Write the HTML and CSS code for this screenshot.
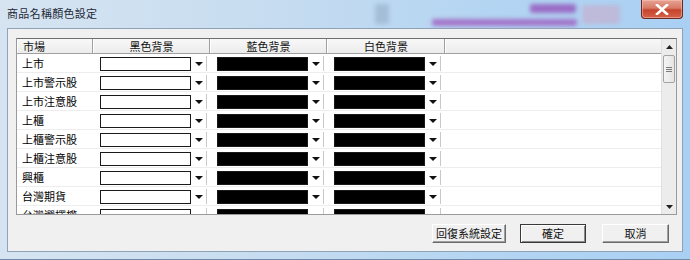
FILE: index.html
```html
<!DOCTYPE html>
<html lang="zh-Hant">
<head>
<meta charset="utf-8">
<title>商品名稱顏色設定</title>
<link rel="stylesheet" href="styles.css">
</head>
<body>
<div class="window">
  <div class="titlebar">
    <div class="glass-bits">
      <span class="bit bit-a"></span>
      <span class="bit bit-b"></span>
      <span class="bit bit-c"></span>
      <span class="bit bit-d"></span>
    </div>
    <span class="title">商品名稱顏色設定</span>
    <div class="close">
      <svg width="14" height="11" viewBox="0 0 14 11"><path d="M2 1 L12 10 M12 1 L2 10" stroke="#fff" stroke-width="2.6" stroke-linecap="square"/></svg>
    </div>
  </div>
  <div class="client">
    <div class="grid">
      <div class="table">
        <div class="thead">
          <div class="th th-name">市場</div>
          <div class="th">黑色背景</div>
          <div class="th">藍色背景</div>
          <div class="th">白色背景</div>
          <div class="th th-fill"></div>
        </div>
        <div class="tbody">
          <div class="row"><div class="name">上市</div><div class="cell"><div class="combo"><span class="box white"></span><span class="drop"></span></div></div><div class="cell"><div class="combo"><span class="box black"></span><span class="drop"></span></div></div><div class="cell"><div class="combo"><span class="box black"></span><span class="drop"></span></div></div><div class="fill"></div></div>
          <div class="row"><div class="name">上市警示股</div><div class="cell"><div class="combo"><span class="box white"></span><span class="drop"></span></div></div><div class="cell"><div class="combo"><span class="box black"></span><span class="drop"></span></div></div><div class="cell"><div class="combo"><span class="box black"></span><span class="drop"></span></div></div><div class="fill"></div></div>
          <div class="row"><div class="name">上市注意股</div><div class="cell"><div class="combo"><span class="box white"></span><span class="drop"></span></div></div><div class="cell"><div class="combo"><span class="box black"></span><span class="drop"></span></div></div><div class="cell"><div class="combo"><span class="box black"></span><span class="drop"></span></div></div><div class="fill"></div></div>
          <div class="row"><div class="name">上櫃</div><div class="cell"><div class="combo"><span class="box white"></span><span class="drop"></span></div></div><div class="cell"><div class="combo"><span class="box black"></span><span class="drop"></span></div></div><div class="cell"><div class="combo"><span class="box black"></span><span class="drop"></span></div></div><div class="fill"></div></div>
          <div class="row"><div class="name">上櫃警示股</div><div class="cell"><div class="combo"><span class="box white"></span><span class="drop"></span></div></div><div class="cell"><div class="combo"><span class="box black"></span><span class="drop"></span></div></div><div class="cell"><div class="combo"><span class="box black"></span><span class="drop"></span></div></div><div class="fill"></div></div>
          <div class="row"><div class="name">上櫃注意股</div><div class="cell"><div class="combo"><span class="box white"></span><span class="drop"></span></div></div><div class="cell"><div class="combo"><span class="box black"></span><span class="drop"></span></div></div><div class="cell"><div class="combo"><span class="box black"></span><span class="drop"></span></div></div><div class="fill"></div></div>
          <div class="row"><div class="name">興櫃</div><div class="cell"><div class="combo"><span class="box white"></span><span class="drop"></span></div></div><div class="cell"><div class="combo"><span class="box black"></span><span class="drop"></span></div></div><div class="cell"><div class="combo"><span class="box black"></span><span class="drop"></span></div></div><div class="fill"></div></div>
          <div class="row"><div class="name">台灣期貨</div><div class="cell"><div class="combo"><span class="box white"></span><span class="drop"></span></div></div><div class="cell"><div class="combo"><span class="box black"></span><span class="drop"></span></div></div><div class="cell"><div class="combo"><span class="box black"></span><span class="drop"></span></div></div><div class="fill"></div></div>
          <div class="row"><div class="name">台灣選擇權</div><div class="cell"><div class="combo"><span class="box white"></span><span class="drop"></span></div></div><div class="cell"><div class="combo"><span class="box black"></span><span class="drop"></span></div></div><div class="cell"><div class="combo"><span class="box black"></span><span class="drop"></span></div></div><div class="fill"></div></div>
        </div>
      </div>
      <div class="scrollbar">
        <div class="sb-btn"><svg width="7" height="4" viewBox="0 0 7 4"><path d="M0 4 L3.5 0 L7 4 Z" fill="#222"/></svg></div>
        <div class="sb-track">
          <div class="thumb"><span class="grip"></span><span class="grip"></span><span class="grip"></span></div>
        </div>
        <div class="sb-btn"><svg width="7" height="4" viewBox="0 0 7 4"><path d="M0 0 L7 0 L3.5 4 Z" fill="#222"/></svg></div>
      </div>
    </div>
    <div class="buttons">
      <button class="btn btn-wide">回復系統設定</button>
      <button class="btn btn-default">確定</button>
      <button class="btn">取消</button>
    </div>
  </div>
</div>
</body>
</html>
```
FILE: styles.css
```css
* { box-sizing: border-box; }
html, body { margin: 0; padding: 0; }
body {
  width: 690px;
  height: 260px;
  overflow: hidden;
  font-family: "Noto Sans CJK TC", "Noto Sans", sans-serif;
  font-size: 11px;
  color: #000;
  background: #c4dcf2;
}
.window {
  width: 690px;
  height: 260px;
  display: flex;
  flex-direction: column;
  padding: 0 7px 7px 7px;
  background: linear-gradient(90deg, #d6e4f1 0%, #c6dcf0 40%, #b4d5f2 70%, #a9d0f3 100%);
  border-bottom: 1px solid #6f8aa6;
}
.titlebar {
  position: relative;
  height: 28px;
  display: flex;
  align-items: flex-start;
  justify-content: space-between;
  flex-shrink: 0;
}
.glass-bits { position: absolute; inset: 0; overflow: hidden; }
.bit { position: absolute; filter: blur(2px); border-radius: 2px; }
.bit-a { left: 523px; top: 4px; width: 46px; height: 9px; background: rgba(150, 90, 190, 0.85); }
.bit-b { left: 425px; top: 19px; width: 145px; height: 7px; background: rgba(160, 100, 195, 0.85); }
.bit-c { left: 575px; top: 5px; width: 38px; height: 19px; background: rgba(214, 150, 180, 0.4); }
.bit-d { left: 368px; top: 4px; width: 14px; height: 20px; background: rgba(110, 130, 160, 0.3); }
.title {
  position: relative;
  margin-top: 6px;
  font-size: 11px;
  line-height: 15px;
  color: #1e2a38;
  letter-spacing: 0.3px;
}
.close {
  position: relative;
  width: 42px;
  height: 19px;
  display: flex;
  align-items: center;
  justify-content: center;
  border: 1px solid #6a2a22;
  border-top: none;
  border-radius: 0 0 4px 4px;
  background: linear-gradient(180deg, #e6a394 0%, #d87a66 45%, #c5442c 55%, #d5624a 100%);
  box-shadow: inset 0 0 0 1px rgba(255, 200, 190, 0.5);
}
.client {
  flex: 1;
  display: flex;
  flex-direction: column;
  background: #f0f0f0;
  border: 1px solid #8ea2b8;
  padding: 9px 5px 0 8px;
}
.grid {
  height: 177px;
  display: flex;
  border: 1px solid #9a9a9a;
  border-top: 1px solid #6e6e6e;
  background: #fff;
}
.table { flex: 1; overflow: hidden; display: flex; flex-direction: column; }
.thead {
  height: 15px;
  display: grid;
  grid-template-columns: 76px 117px 117px 118px 1fr;
  border-bottom: 1px solid #a0a0a0;
  background: linear-gradient(180deg, #f8f8f8, #ececec);
  flex-shrink: 0;
}
.th {
  border-right: 1px solid #a0a0a0;
  border-left: 1px solid #fff;
  text-align: center;
  line-height: 14px;
  font-size: 11px;
  color: #111;
}
.th-name { text-align: left; padding-left: 5px; }
.th-fill { border-right: none; }
.tbody { flex: 1; overflow: hidden; }
.row {
  height: 19px;
  display: grid;
  grid-template-columns: 76px 117px 117px 118px 1fr;
  border-bottom: 1px solid #ededed;
}
.name {
  padding-left: 5px;
  line-height: 19px;
  font-size: 11px;
  white-space: nowrap;
  overflow: hidden;
}
.cell { padding: 3px 0 0 7px; }
.cell:last-of-type { padding-left: 6px; }
.combo { display: flex; height: 14px; width: 107px; }
.box { width: 91px; height: 14px; border: 1px solid #1a1a1a; }
.box.white { background: #fff; }
.box.black { background: #000; }
.drop {
  width: 16px;
  height: 15px;
  margin-top: -1px;
  border-right: 1px solid #c9c9c9;
  position: relative;
  background: #fff;
}
.drop::after {
  content: "";
  position: absolute;
  left: 4px;
  top: 6px;
  border-left: 4px solid transparent;
  border-right: 4px solid transparent;
  border-top: 4px solid #111;
}
.scrollbar {
  width: 15px;
  display: flex;
  flex-direction: column;
  background: #ececec;
  border-left: 1px solid #e0e0e0;
}
.sb-btn {
  height: 15px;
  display: flex;
  align-items: center;
  justify-content: center;
}
.sb-track { flex: 1; padding-top: 1px; }
.thumb {
  height: 28px;
  margin: 0 1px;
  border: 1px solid #a3a3a3;
  border-radius: 2px;
  background: linear-gradient(90deg, #f4f4f4, #e4e4e4);
  display: flex;
  flex-direction: column;
  align-items: center;
  justify-content: center;
  gap: 1px;
}
.grip { width: 6px; height: 1px; background: #7a7a7a; }
.buttons {
  display: flex;
  justify-content: flex-end;
  gap: 14px;
  margin-top: 9px;
  padding-right: 8px;
}
.btn {
  height: 19px;
  width: 67px;
  padding: 0;
  font-family: "Noto Sans CJK TC", "Noto Sans", sans-serif;
  font-size: 11px;
  line-height: 15px;
  color: #111;
  background: #f0f0f0;
  border: 1px solid;
  border-color: #fff #6a6a6a #6a6a6a #fff;
  box-shadow: inset -1px -1px 0 #a0a0a0;
}
.btn-wide { width: 74px; }
.btn-default {
  width: 66px;
  border: 1px solid #3a3a3a;
  box-shadow: inset 1px 1px 0 #fff, inset -1px -1px 0 #8a8a8a;
  margin-right: 2px;
}
```
